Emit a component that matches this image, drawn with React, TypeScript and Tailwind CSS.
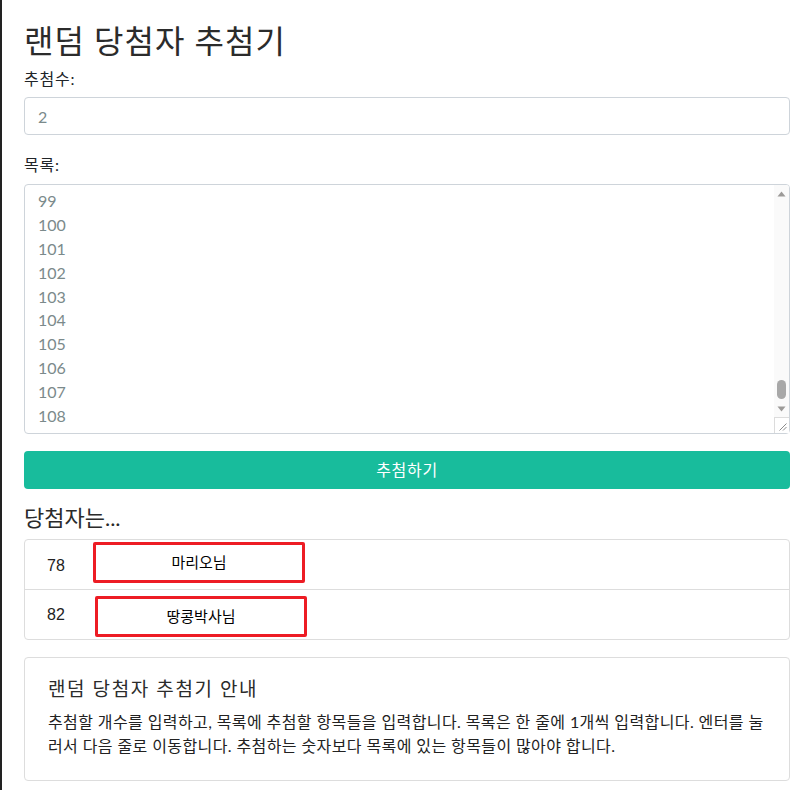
import React, { useEffect, useRef } from "react";

const items = Array.from({ length: 108 }, (_, i) => String(i + 1)).join("\n");

function Arrow({ up }: { up?: boolean }) {
  return (
    <svg width="9" height="6" viewBox="0 0 9 6">
      {up ? <path d="M4.5 0.5 L8.5 5.5 L0.5 5.5 Z" fill="#9c9a98" /> : <path d="M0.5 0.5 L8.5 0.5 L4.5 5.5 Z" fill="#9c9a98" />}
    </svg>
  );
}

export default function App() {
  const ta = useRef<HTMLTextAreaElement>(null);
  useEffect(() => {
    if (ta.current) ta.current.scrollTop = ta.current.scrollHeight;
  }, []);
  return (
    <div
      className="min-h-[790px] border-l-2 border-[#222] bg-white pl-[22px] pr-[14px] pt-[22px] text-[#212529]"
      style={{ fontFamily: 'Lato, "Noto Sans CJK KR", sans-serif' }}
    >
      <h1 className="mb-[7px] text-[32px] leading-[1.2] tracking-[1px] text-[#2b2b2b]">랜덤 당첨자 추첨기</h1>
      <div className="mb-[18px]">
        <label className="mb-[6px] block text-[16px] leading-[24px] tracking-[0.8px]">추첨수:</label>
        <input
          className="block h-[38px] w-full rounded-[4px] border border-[#ced4da] px-[13px] text-[16px] text-[#7b8a8b] outline-none"
          defaultValue="2"
        />
      </div>
      <div>
        <label className="mb-[7px] block text-[16px] leading-[24px] tracking-[0.8px]">목록:</label>
        <div className="relative">
          <textarea
            ref={ta}
            className="block h-[250px] w-full resize-none rounded-[4px] border border-[#ced4da] px-[13px] py-[6px] text-[16px] leading-[23.8px] text-[#7b8a8b] outline-none [scrollbar-width:none]"
            defaultValue={items}
          />
          <div className="pointer-events-none absolute top-[1px] right-[1px] bottom-[1px] flex w-[15px] flex-col rounded-r-[3px] bg-[#fafafa]">
            <div className="flex h-[18px] items-center justify-center">
              <Arrow up />
            </div>
            <div className="flex flex-1 items-end justify-center pb-[2px]">
              <div className="h-[19px] w-[9px] rounded-full bg-[#a8a8a8]" />
            </div>
            <div className="flex h-[16px] items-center justify-center">
              <Arrow />
            </div>
            <div className="flex h-[16px] items-end justify-end border-t border-l border-[#dcdcdc] bg-white p-[2px]">
              <svg width="9" height="9" viewBox="0 0 9 9">
                <path d="M8.5 1.5 L1.5 8.5 M8.5 5 L5 8.5" stroke="#8a8a8a" strokeWidth="1" />
              </svg>
            </div>
          </div>
        </div>
      </div>
      <button className="mt-[17px] block h-[38px] w-full rounded-[4px] bg-[#18bc9c] text-[16px] tracking-[0.7px] text-white">
        추첨하기
      </button>
      <h4 className="mt-[16px] mb-[7px] text-[22px] leading-[1.2] text-[#2b2b2b]">당첨자는...</h4>
      <ul className="rounded-[4px] border border-[#dddddd]">
        <li className="flex h-[50px] items-start border-b border-[#dddddd] pl-[22px]">
          <span className="mt-[15px] w-[46px] text-[16px] leading-[22px] text-[#222]" style={{ fontFamily: '"Liberation Sans", sans-serif' }}>78</span>
          <span className="mt-[2px] flex h-[41px] w-[212px] items-center justify-center rounded-[2px] border-[3px] border-[#ed1c24] text-[15px] text-black">
            마리오님
          </span>
        </li>
        <li className="flex h-[49px] items-start pl-[22px]">
          <span className="mt-[14px] w-[48px] text-[16px] leading-[22px] text-[#222]" style={{ fontFamily: '"Liberation Sans", sans-serif' }}>82</span>
          <span className="mt-[6px] flex h-[41px] w-[212px] items-center justify-center rounded-[2px] border-[3px] border-[#ed1c24] text-[15px] text-black">
            땅콩박사님
          </span>
        </li>
      </ul>
      <div className="mt-[17px] rounded-[4px] border border-[#dddddd] px-[23px] pt-[20px] pb-[22px]">
        <h5 className="mb-[9px] text-[19px] leading-[1.2] tracking-[1.6px] text-[#2b2b2b]">랜덤 당첨자 추첨기 안내</h5>
        <p className="text-[16px] leading-[24px] tracking-[0.4px] text-[#222]">
          추첨할 개수를 입력하고, 목록에 추첨할 항목들을 입력합니다. 목록은 한 줄에 1개씩 입력합니다. 엔터를 눌러서 다음 줄로 이동합니다. 추첨하는 숫자보다 목록에 있는 항목들이 많아야 합니다.
        </p>
      </div>
    </div>
  );
}
